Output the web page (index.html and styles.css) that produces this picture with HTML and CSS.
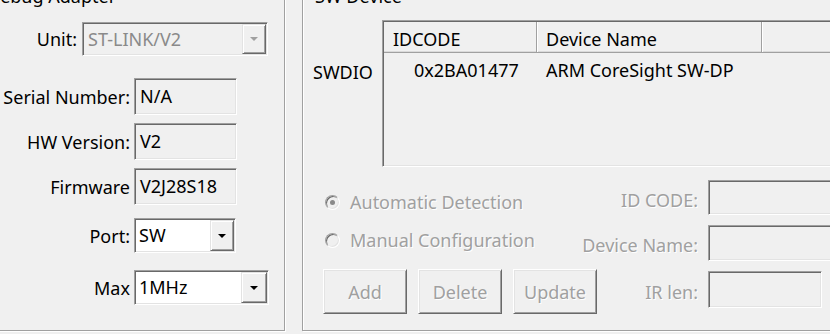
FILE: index.html
```html
<!DOCTYPE html>
<html>
<head>
<meta charset="utf-8">
<title>Debug Settings</title>
<link rel="stylesheet" href="styles.css">
</head>
<body>
<div class="dialog">
  <section class="group group-adapter">
    <div class="group-title">Debug Adapter</div>
    <div class="unit-row">
      <span class="lbl unit-lbl">Unit:</span>
      <div class="combo combo-disabled combo-unit">
        <span class="combo-text">ST-LINK/V2</span>
        <span class="drop"><i class="arrow"></i></span>
      </div>
    </div>
    <div class="info-row row-serial">
      <span class="lbl">Serial Number:</span>
      <div class="field field-info">N/A</div>
    </div>
    <div class="info-row">
      <span class="lbl">HW Version:</span>
      <div class="field field-info">V2</div>
    </div>
    <div class="info-row">
      <span class="lbl">Firmware</span>
      <div class="field field-info">V2J28S18</div>
    </div>
    <div class="info-row row-port">
      <span class="lbl">Port:</span>
      <div class="combo combo-port">
        <span class="combo-text">SW</span>
        <span class="drop"><i class="arrow"></i></span>
      </div>
    </div>
    <div class="info-row row-max">
      <span class="lbl">Max</span>
      <div class="combo combo-max">
        <span class="combo-text">1MHz</span>
        <span class="drop drop-wide"><i class="arrow"></i></span>
      </div>
    </div>
  </section>

  <section class="group group-device">
    <div class="group-title">SW Device</div>
    <div class="device-top">
      <div class="swdio">SWDIO</div>
      <div class="list">
        <div class="list-head">
          <div class="th th-id">IDCODE</div>
          <div class="th th-name">Device Name</div>
          <div class="th th-rest"></div>
        </div>
        <div class="list-row">
          <div class="td td-id">0x2BA01477</div>
          <div class="td td-name">ARM CoreSight SW-DP</div>
        </div>
      </div>
    </div>
    <div class="device-bottom">
      <div class="mode-col">
        <div class="radio-row"><span class="radio radio-checked"></span><span class="dis">Automatic Detection</span></div>
        <div class="radio-row radio-row-2"><span class="radio"></span><span class="dis">Manual Configuration</span></div>
        <div class="btn-row">
          <button class="btn" disabled>Add</button>
          <button class="btn" disabled>Delete</button>
          <button class="btn" disabled>Update</button>
        </div>
      </div>
      <div class="manual-grid">
        <span class="dis mlbl">ID CODE:</span>
        <div class="field field-wide"></div>
        <span class="dis mlbl">Device Name:</span>
        <div class="field field-wide"></div>
        <span class="dis mlbl">IR len:</span>
        <div class="field field-ir"></div>
      </div>
    </div>
  </section>
</div>
</body>
</html>
```

FILE: styles.css
```css
html, body {
  margin: 0;
  padding: 0;
}
body {
  width: 830px;
  height: 334px;
  overflow: hidden;
  background: #f0f0f0;
  font-family: "Noto Sans", "Open Sans", sans-serif;
  font-size: 18px;
  line-height: 24px;
  color: #000;
}

.dialog {
  display: flex;
  gap: 17px;
  margin: -4px 0 0 -26px;
}

.group {
  position: relative;
  box-sizing: border-box;
  flex: none;
  height: 335px;
  border: 1px solid #a0a0a0;
  box-shadow: 1px 1px 0 #fff, inset 1px 1px 0 #fff;
}
.group-adapter {
  width: 311px;
  padding-top: 25px;
}
.group-device {
  width: 560px;
  padding-top: 23px;
}
.group-title {
  position: absolute;
  top: -13px;
  left: 9px;
  padding: 0 3px;
  background: #f0f0f0;
  white-space: nowrap;
}

/* sunken edit / combo frame */
.field,
.combo {
  box-sizing: border-box;
  border: 1px solid;
  border-color: #a0a0a0 #fff #fff #a0a0a0;
  box-shadow: inset 1px 1px 0 #696969, inset -1px -1px 0 #e3e3e3;
}
.field {
  background: #f0f0f0;
}

/* left group */
.unit-row {
  display: flex;
  align-items: center;
  gap: 5px;
}
.lbl {
  text-align: right;
  white-space: nowrap;
}
.unit-lbl {
  width: 102px;
}
.info-row {
  display: flex;
  align-items: center;
  gap: 4px;
  margin-top: 8px;
}
.info-row .lbl {
  flex: none;
  width: 155px;
}
.row-serial { margin-top: 22px; }
.row-port { margin-top: 13px; }
.row-max { margin-top: 17px; }

.field-info {
  width: 103px;
  height: 37px;
  padding-left: 5px;
  line-height: 35px;
}

.combo {
  display: flex;
  align-items: stretch;
  padding: 1px;
  background: #fff;
  height: 35px;
}
.combo-unit {
  width: 186px;
  height: 34px;
}
.combo-port { width: 102px; }
.combo-max { width: 135px; }
.combo-disabled {
  background: #f0f0f0;
}
.combo-text {
  flex: 1;
  padding-left: 3px;
  line-height: 31px;
  white-space: nowrap;
}
.combo-disabled .combo-text {
  color: #8a8a8a;
  padding-left: 4px;
}
.drop {
  flex: none;
  box-sizing: border-box;
  width: 24px;
  display: flex;
  align-items: center;
  justify-content: center;
  background: #f0f0f0;
  border: 1px solid;
  border-color: #e3e3e3 #696969 #696969 #e3e3e3;
  box-shadow: inset 1px 1px 0 #fff, inset -1px -1px 0 #a0a0a0;
}
.drop-wide { width: 26px; }
.arrow {
  display: block;
  width: 0;
  height: 0;
  border-left: 4px solid transparent;
  border-right: 4px solid transparent;
  border-top: 4px solid #000;
}
.combo-disabled .arrow {
  border-top-color: #a0a0a0;
}

/* right group */
.device-top {
  display: flex;
  align-items: flex-start;
  padding-left: 10px;
}
.swdio {
  flex: none;
  width: 69px;
  margin-top: 40px;
}
.list {
  flex: none;
  box-sizing: border-box;
  width: 480px;
  height: 147px;
  border: 1px solid;
  border-color: #a0a0a0 #fff #fff #a0a0a0;
  box-shadow: inset 1px 1px 0 #696969, inset -1px -1px 0 #e3e3e3;
  padding: 1px;
  background: #f0f0f0;
}
.list-head {
  display: flex;
}
.th {
  box-sizing: border-box;
  height: 31px;
  padding: 5px 0 0 9px;
  border-right: 1px solid #a0a0a0;
  border-bottom: 1px solid #a0a0a0;
  box-shadow: inset 0 -1px 0 #dadada;
  white-space: nowrap;
}
.th + .th {
  box-shadow: inset 1px 0 0 #fff, inset 0 -1px 0 #dadada;
}
.th-id { width: 153px; }
.th-name { width: 225px; }
.th-rest { flex: 1; border-right: none; }

.list-row {
  display: flex;
  padding-top: 5px;
}
.td {
  box-sizing: border-box;
  white-space: nowrap;
}
.td-id {
  width: 153px;
  padding-left: 30px;
}
.td-name {
  padding-left: 9px;
}

.device-bottom {
  display: flex;
  margin-top: 13px;
}
.dis {
  color: #a0a0a0;
  text-shadow: 1px 1px 0 #fff;
  white-space: nowrap;
}
.mode-col {
  flex: none;
  width: 247px;
  margin-left: 20px;
  padding-top: 10px;
}
.radio-row {
  display: flex;
  align-items: center;
  height: 24px;
}
.radio-row-2 {
  margin-top: 14px;
}
.radio {
  flex: none;
  position: relative;
  box-sizing: border-box;
  width: 15px;
  height: 15px;
  margin: 0 10px 0 2px;
  border-radius: 50%;
  border: 1px solid;
  border-color: #a0a0a0 #fff #fff #a0a0a0;
  box-shadow: inset 1px 1px 0 #696969, inset -1px -1px 0 #e3e3e3;
  background: #f0f0f0;
}
.radio-checked::after {
  content: "";
  position: absolute;
  left: 4px;
  top: 4px;
  width: 5px;
  height: 5px;
  border-radius: 50%;
  background: #8a8a8a;
}
.btn-row {
  display: flex;
  gap: 11px;
  margin-top: 17px;
}
.btn {
  flex: none;
  box-sizing: border-box;
  width: 84px;
  height: 45px;
  padding: 0;
  font: inherit;
  color: #a0a0a0;
  text-shadow: 1px 1px 0 #fff;
  background: #f0f0f0;
  border: 1px solid;
  border-color: #fff #696969 #696969 #fff;
  box-shadow: inset 1px 1px 0 #e3e3e3, inset -1px -1px 0 #a0a0a0;
  border-radius: 0;
}

.manual-grid {
  display: grid;
  grid-template-columns: 128px 1fr;
  grid-template-rows: 35px 36px 37px;
  column-gap: 10px;
  row-gap: 10px;
  align-items: center;
}
.mlbl {
  text-align: right;
  padding-top: 4px;
}
.field-wide {
  width: 140px;
  height: 100%;
}
.field-ir {
  width: 114px;
  height: 100%;
}
```
